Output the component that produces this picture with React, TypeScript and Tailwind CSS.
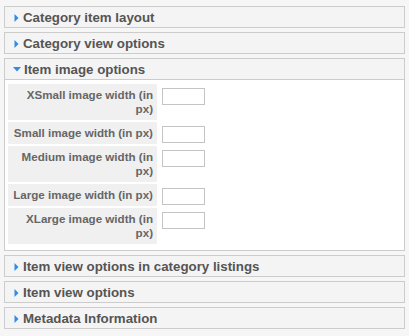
import React from 'react';

const font = { fontFamily: '"Liberation Sans", Arial, sans-serif' };

const Arrow: React.FC<{ open?: boolean }> = ({ open }) =>
  open ? (
    <svg width="8" height="5" viewBox="0 0 8 5" className="mr-[3px]">
      <path d="M0 0 H8 L4 4.5 Z" fill="#2f8be6" />
    </svg>
  ) : (
    <svg width="5" height="8" viewBox="0 0 5 8" className="ml-[1px] mr-[4px]">
      <path d="M0.5 0 V8 L4.5 4 Z" fill="#2f8be6" />
    </svg>
  );

const Header: React.FC<{ title: string; open?: boolean }> = ({ title, open }) => (
  <div className="flex items-center h-[22px] pl-[8px] pt-[1px] bg-[#f4f4f4] border border-[#cccccc] text-[13.3px] font-bold text-[#555555] leading-none">
    <Arrow open={open} />
    <span>{title}</span>
  </div>
);

const rows = [
  'XSmall image width (in px)',
  'Small image width (in px)',
  'Medium image width (in px)',
  'Large image width (in px)',
  'XLarge image width (in px)',
];

export default function App() {
  return (
    <div className="w-[409px] h-[336px] bg-[#f6f6f6] pt-[6px] px-[4px]" style={font}>
      <div className="w-[401px] flex flex-col gap-[4px]">
        <Header title="Category item layout" />
        <Header title="Category view options" />
        <div>
          <Header title="Item image options" open />
          <div className="bg-white border border-t-0 border-[#cccccc] pl-[3px] pt-[4px] pb-[6px] flex flex-col gap-[2px]">
            {rows.map((r) => (
              <div key={r} className="flex items-start">
                <div className="w-[149px] bg-[#f0f0f0] text-right text-[11.6px] font-bold text-[#666666] leading-[14px] px-[4px] py-[4px]">
                  {r}
                </div>
                <div className="ml-[5px] mt-[4px] w-[43px] h-[17px] border border-[#c4c4c4] bg-white" />
              </div>
            ))}
          </div>
        </div>
        <Header title="Item view options in category listings" />
        <Header title="Item view options" />
        <Header title="Metadata Information" />
      </div>
    </div>
  );
}
